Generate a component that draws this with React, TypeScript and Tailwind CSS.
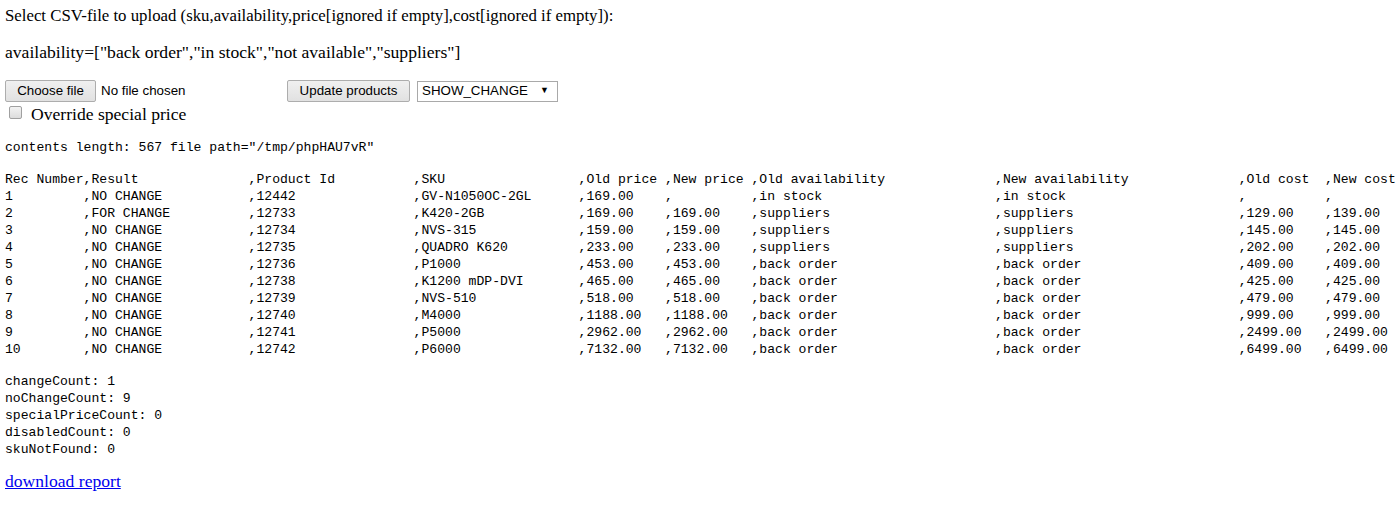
import React from "react";

const serif = "font-['Liberation_Serif','Times_New_Roman',serif]";
const sans = "font-['Liberation_Sans',Arial,sans-serif]";
const mono = "font-['Liberation_Mono','DejaVu_Sans_Mono',monospace]";

const widths = [10, 21, 21, 21, 11, 11, 31, 31, 11, 0];

const header = [
  "Rec Number",
  "Result",
  "Product Id",
  "SKU",
  "Old price",
  "New price",
  "Old availability",
  "New availability",
  "Old cost",
  "New cost",
];

const rows = [
  ["1", "NO CHANGE", "12442", "GV-N1050OC-2GL", "169.00", "", "in stock", "in stock", "", ""],
  ["2", "FOR CHANGE", "12733", "K420-2GB", "169.00", "169.00", "suppliers", "suppliers", "129.00", "139.00"],
  ["3", "NO CHANGE", "12734", "NVS-315", "159.00", "159.00", "suppliers", "suppliers", "145.00", "145.00"],
  ["4", "NO CHANGE", "12735", "QUADRO K620", "233.00", "233.00", "suppliers", "suppliers", "202.00", "202.00"],
  ["5", "NO CHANGE", "12736", "P1000", "453.00", "453.00", "back order", "back order", "409.00", "409.00"],
  ["6", "NO CHANGE", "12738", "K1200 mDP-DVI", "465.00", "465.00", "back order", "back order", "425.00", "425.00"],
  ["7", "NO CHANGE", "12739", "NVS-510", "518.00", "518.00", "back order", "back order", "479.00", "479.00"],
  ["8", "NO CHANGE", "12740", "M4000", "1188.00", "1188.00", "back order", "back order", "999.00", "999.00"],
  ["9", "NO CHANGE", "12741", "P5000", "2962.00", "2962.00", "back order", "back order", "2499.00", "2499.00"],
  ["10", "NO CHANGE", "12742", "P6000", "7132.00", "7132.00", "back order", "back order", "6499.00", "6499.00"],
];

// each field after the first starts with a comma, padded to the column width
const formatLine = (cells: string[]) =>
  cells
    .map((c, i) => {
      const s = i === 0 ? c : "," + c;
      return widths[i] ? s.padEnd(widths[i], " ") : s;
    })
    .join("");

const counts = [
  "changeCount: 1",
  "noChangeCount: 9",
  "specialPriceCount: 0",
  "disabledCount: 0",
  "skuNotFound: 0",
];

const App = () => {
  return (
    <div className="bg-white min-h-screen text-black px-[5px] overflow-hidden">
      <p className={`${serif} text-[16.8px] leading-[18px] mt-[7px] whitespace-nowrap`}>
        Select CSV-file to upload (sku,availability,price[ignored if empty],cost[ignored if empty]):
      </p>
      <p className={`${serif} text-[17.6px] leading-[18px] mt-[18px] whitespace-nowrap`}>
        availability=["back order","in stock","not available","suppliers"]
      </p>

      <div className={`${sans} flex items-center mt-[19px] text-[13.33px]`}>
        <div className="flex items-center w-[278px] shrink-0">
          <button className="h-[22px] w-[91px] border border-[#adadad] rounded-[2px] bg-gradient-to-b from-[#f0f0f0] to-[#e1e1e1] text-black">
            Choose file
          </button>
          <span className="ml-[5px]">No file chosen</span>
        </div>
        <button className="ml-[4px] h-[22px] w-[123px] border border-[#adadad] rounded-[2px] bg-gradient-to-b from-[#f0f0f0] to-[#e1e1e1] text-black">
          Update products
        </button>
        <div className="ml-[7px] h-[21px] w-[141px] border border-[#a9a9a9] bg-white flex items-center justify-between pl-[4px] pr-[8px]">
          <span>SHOW_CHANGE</span>
          <span className="text-[9px]">▼</span>
        </div>
      </div>

      <div className="flex items-center mt-[3px]">
        <span className="ml-[4px] w-[13px] h-[13px] border border-[#a0a0a0] rounded-[2px] bg-gradient-to-b from-[#f3f3f3] to-[#dcdcdc] -mt-[3px]" />
        <span className={`${serif} text-[17.6px] leading-[18px] ml-[9px]`}>Override special price</span>
      </div>

      <pre className={`${mono} text-[13.1px] leading-[17px] mt-[16px]`}>
        contents length: 567 file path="/tmp/phpHAU7vR"
      </pre>

      <pre className={`${mono} text-[13.1px] leading-[17px] mt-[15px] whitespace-pre`}>
        {[formatLine(header), ...rows.map(formatLine)].join("\n")}
      </pre>

      <pre className={`${mono} text-[13.1px] leading-[17px] mt-[15px]`}>
        {counts.join("\n")}
      </pre>

      <a
        href="#"
        className={`${serif} block w-fit text-[17.6px] leading-[18px] mt-[14px] text-[#0000ee] underline`}
      >
        download report
      </a>
    </div>
  );
};

export default App;
